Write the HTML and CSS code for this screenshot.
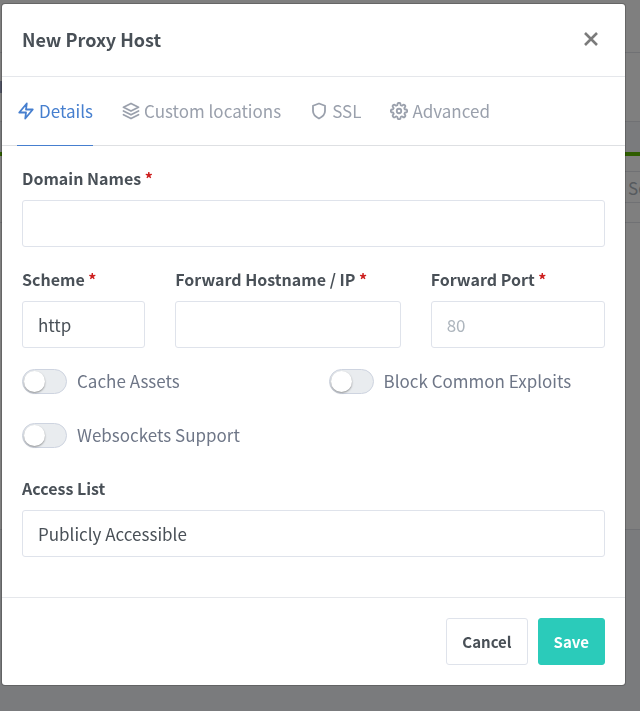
FILE: index.html
```html
<!DOCTYPE html>
<html lang="en">
<head>
    <meta charset="UTF-8">
    <meta name="viewport" content="width=device-width, initial-scale=1.0">
    <title>New Proxy Host</title>
    <link rel="stylesheet" href="styles.css">
</head>
<body>
    <!-- Page under the dialog -->
    <div class="page" inert>
        <div class="top-bar"></div>
        <div class="nav-bar"><span class="nav-mark"></span></div>
        <div class="card">
            <div class="card-header">
                <input class="search" type="text" placeholder="Search Host…" aria-label="Search Host">
            </div>
            <div class="card-body"></div>
        </div>
    </div>

    <div class="backdrop">
        <form class="modal" role="dialog" aria-labelledby="modal-title">
            <div class="modal-header">
                <h5 class="modal-title" id="modal-title">New Proxy Host</h5>
                <button type="button" class="close" aria-label="Close">
                    <svg viewBox="0 0 16 16" width="16" height="16"><path d="M2 2l12 12M14 2L2 14"></path></svg>
                </button>
            </div>

            <nav class="tabs">
                <a href="#details" class="tab active">
                    <svg class="icon" viewBox="0 0 24 24"><path d="M13 2L3 14h9l-1 8 10-12h-9l1-8z"></path></svg>
                    Details
                </a>
                <a href="#locations" class="tab">
                    <svg class="icon" viewBox="0 0 24 24"><path d="M12 2L2 7l10 5 10-5-10-5z"></path><path d="M2 17l10 5 10-5"></path><path d="M2 12l10 5 10-5"></path></svg>
                    Custom locations
                </a>
                <a href="#ssl" class="tab">
                    <svg class="icon" viewBox="0 0 24 24"><path d="M12 22s8-4 8-10V5l-8-3-8 3v7c0 6 8 10 8 10z"></path></svg>
                    SSL
                </a>
                <a href="#advanced" class="tab">
                    <svg class="icon" viewBox="0 0 24 24"><circle cx="12" cy="12" r="3"></circle><path d="M19.4 15a1.65 1.65 0 0 0 .33 1.82l.06.06a2 2 0 0 1-2.83 2.83l-.06-.06a1.65 1.65 0 0 0-2.8 1.17V21a2 2 0 0 1-4 0v-.09A1.65 1.65 0 0 0 9 19.4a1.65 1.65 0 0 0-1.82.33l-.06.06a2 2 0 0 1-2.83-2.83l.06-.06A1.65 1.65 0 0 0 3.09 14H3a2 2 0 0 1 0-4h.09A1.65 1.65 0 0 0 4.6 9a1.65 1.65 0 0 0-.33-1.82l-.06-.06a2 2 0 0 1 2.83-2.83l.06.06A1.65 1.65 0 0 0 9 4.68 1.65 1.65 0 0 0 10 3.17V3a2 2 0 0 1 4 0v.09a1.65 1.65 0 0 0 2.82 1.26l.06-.06a2 2 0 0 1 2.83 2.83l-.06.06A1.65 1.65 0 0 0 20.91 10H21a2 2 0 0 1 0 4h-.09a1.65 1.65 0 0 0-1.51 1z"></path></svg>
                    Advanced
                </a>
            </nav>

            <div class="modal-body">
                <div class="form-group col-12">
                    <label class="form-label" for="domain-names">Domain Names <span class="required">*</span></label>
                    <input class="form-control" type="text" id="domain-names">
                </div>
                <div class="form-group col-3">
                    <label class="form-label" for="scheme">Scheme <span class="required">*</span></label>
                    <select class="form-control" id="scheme">
                        <option>http</option>
                        <option>https</option>
                    </select>
                </div>
                <div class="form-group col-5">
                    <label class="form-label" for="forward-host">Forward Hostname / IP <span class="required">*</span></label>
                    <input class="form-control" type="text" id="forward-host">
                </div>
                <div class="form-group col-4">
                    <label class="form-label" for="forward-port">Forward Port <span class="required">*</span></label>
                    <input class="form-control" type="text" id="forward-port" placeholder="80">
                </div>
                <label class="switch col-6">
                    <input type="checkbox" class="switch-input">
                    Cache Assets
                </label>
                <label class="switch col-6">
                    <input type="checkbox" class="switch-input">
                    Block Common Exploits
                </label>
                <label class="switch col-12">
                    <input type="checkbox" class="switch-input">
                    Websockets Support
                </label>
                <div class="form-group col-12">
                    <label class="form-label" for="access-list">Access List</label>
                    <select class="form-control" id="access-list">
                        <option>Publicly Accessible</option>
                    </select>
                </div>
            </div>

            <div class="modal-footer">
                <button type="button" class="btn btn-secondary">Cancel</button>
                <button type="button" class="btn btn-teal">Save</button>
            </div>
        </form>
    </div>
</body>
</html>
```

FILE: styles.css
```css
:root {
    --text-color: #495057;
    --muted-color: #9aa0ac;
    --border-color: #dfe3eb;
    --line-color: #e5e7eb;
    --primary-color: #467fcf;
    --teal-color: #2bcbba;
}

* {
    margin: 0;
    padding: 0;
    box-sizing: border-box;
}

body {
    background: #f5f7fb;
    color: var(--text-color);
    font-family: "Source Sans Pro", "Noto Sans CJK SC", sans-serif;
    font-size: 17px;
    line-height: 24px;
}

input,
select,
button {
    font: inherit;
    color: inherit;
}

/* Page */
.top-bar {
    height: 53px;
    background: #fff;
    border-bottom: 1px solid #e0e2e8;
}

.nav-bar {
    display: flex;
    align-items: center;
    height: 69px;
    margin-bottom: 30px;
    background: #fff;
    border-bottom: 1px solid #e0e2e8;
}

.nav-mark {
    width: 12px;
    height: 12px;
    background: #a0a8c8;
}

.card {
    background: #fff;
    border-top: 4px solid #5eba00;
    border-bottom: 1px solid #e0e2e8;
}

.card-header {
    display: flex;
    justify-content: flex-end;
    padding: 15px 0 19px;
    border-bottom: 1px solid #e0e2e8;
}

.search {
    width: 28px;
    height: 32px;
    padding-left: 15px;
    border: 1px solid #e0e2e8;
    border-right: none;
}

.search::placeholder {
    color: #adb5bd;
}

.card-body {
    height: 306px;
}

/* Dialog */
.backdrop {
    position: fixed;
    inset: 0;
    padding: 3px 14px 24px 1px;
    background: rgba(0, 0, 0, 0.5);
    overflow: hidden;
}

.modal {
    background: #fff;
    background-clip: padding-box;
    border: 1px solid rgba(0, 0, 0, 0.2);
    border-radius: 4px;
}

.modal-header {
    display: flex;
    justify-content: space-between;
    align-items: center;
    padding: 23px 20px 25px;
    border-bottom: 1px solid var(--line-color);
}

.modal-title {
    font-size: 18px;
    font-weight: 600;
}

.close {
    display: flex;
    padding: 4px 6px;
    border: none;
    background: none;
    cursor: pointer;
}

.close svg {
    fill: none;
    stroke: #7b7b7b;
    stroke-width: 2.6;
}

.tabs {
    display: flex;
    gap: 29px;
    padding: 0 15px;
    border-bottom: 1px solid #dee0e3;
}

.tab {
    display: flex;
    align-items: center;
    gap: 4px;
    margin-bottom: -1px;
    padding: 22px 0;
    border-bottom: 1px solid transparent;
    color: var(--muted-color);
    text-decoration: none;
}

.tab.active {
    color: var(--primary-color);
    border-color: var(--primary-color);
}

.icon {
    width: 18px;
    height: 18px;
    fill: none;
    stroke: currentColor;
    stroke-width: 2.4;
    stroke-linecap: round;
    stroke-linejoin: round;
}

.modal-body {
    display: grid;
    grid-template-columns: repeat(12, 1fr);
    column-gap: 30px;
    padding: 20px;
}

.col-3 { grid-column: span 3; }
.col-4 { grid-column: span 4; }
.col-5 { grid-column: span 5; }
.col-6 { grid-column: span 6; }
.col-12 { grid-column: span 12; }

.form-group {
    margin-bottom: 20px;
}

.form-label {
    display: block;
    margin-bottom: 10px;
    font-size: 16px;
    font-weight: 600;
}

.required {
    color: #cd201f;
}

.form-control {
    display: block;
    width: 100%;
    height: 47px;
    padding: 0 15px;
    background: #fff;
    border: 1px solid var(--border-color);
    border-radius: 3px;
    appearance: none;
}

.form-control::placeholder {
    color: #adb5bd;
}

.switch {
    display: flex;
    align-items: center;
    gap: 10px;
    height: 26px;
    margin-bottom: 28px;
    color: #6e7687;
}

.switch-input {
    width: 45px;
    height: 25px;
    padding: 1px;
    background: #e9ecef;
    border: 1px solid #ced4e0;
    border-radius: 13px;
    appearance: none;
    cursor: pointer;
}

.switch-input::before {
    content: "";
    display: block;
    width: 21px;
    height: 21px;
    background: #fff;
    border-radius: 50%;
    box-shadow: 0 1px 2px rgba(0, 0, 0, 0.4);
}

.switch-input:checked {
    background: var(--primary-color);
}

.switch-input:checked::before {
    margin-left: 20px;
}

.modal-footer {
    display: flex;
    justify-content: flex-end;
    gap: 10px;
    padding: 20px;
    border-top: 1px solid var(--line-color);
}

.btn {
    height: 47px;
    padding: 0 15px;
    border: 1px solid var(--border-color);
    border-radius: 3px;
    font-size: 15px;
    font-weight: 600;
    cursor: pointer;
}

.btn-secondary {
    background: #fff;
}

.btn-teal {
    background: var(--teal-color);
    border-color: var(--teal-color);
    color: #fff;
}
```
